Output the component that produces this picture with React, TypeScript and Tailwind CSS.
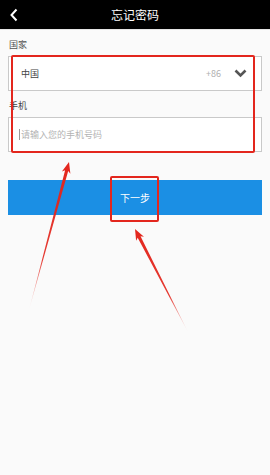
import React from "react";

const RED = "#e3261d";

function Arrow({ x1, y1, x2, y2, id }: { x1: number; y1: number; x2: number; y2: number; id: string }) {
  // tail (x1,y1) -> tip (x2,y2)
  const dx = x2 - x1;
  const dy = y2 - y1;
  const len = Math.hypot(dx, dy);
  const ux = dx / len;
  const uy = dy / len;
  const nx = -uy;
  const ny = ux;
  const bx = x2 - ux * 11;
  const by = y2 - uy * 11;
  const head = [
    [x2, y2],
    [bx + nx * 4.4, by + ny * 4.4],
    [bx + ux * 2 + nx * 1.6, by + uy * 2 + ny * 1.6],
    [x1, y1],
    [bx + ux * 2 - nx * 1.6, by + uy * 2 - ny * 1.6],
    [bx - nx * 4.4, by - ny * 4.4],
  ]
    .map((p) => p.join(","))
    .join(" ");
  return (
    <>
      <defs>
        <linearGradient id={id} gradientUnits="userSpaceOnUse" x1={x1} y1={y1} x2={x2} y2={y2}>
          <stop offset="0" stopColor={RED} stopOpacity="0" />
          <stop offset="0.35" stopColor={RED} stopOpacity="0.9" />
          <stop offset="1" stopColor={RED} stopOpacity="1" />
        </linearGradient>
      </defs>
      <polygon points={head} fill={`url(#${id})`} />
    </>
  );
}

export default function App() {
  return (
    <div
      className="relative w-[270px] h-[475px] bg-[#fafafa] overflow-hidden"
      style={{ fontFamily: '"Noto Sans CJK SC", "Liberation Sans", sans-serif' }}
    >
      <header className="h-[30px] bg-black flex items-center relative border-b border-[#e5e5e5]">
        <svg className="ml-[9px]" width="10" height="14" viewBox="0 0 10 14">
          <polyline points="7.5,1.5 2.5,7 7.5,12.5" fill="none" stroke="white" strokeWidth="2" />
        </svg>
        <h1 className="absolute inset-x-0 text-center text-white text-[12px] leading-none">忘记密码</h1>
      </header>

      <main className="px-2">
        <p className="mt-[9px] text-[9px] leading-[12px] text-[#555] pl-px">国家</p>
        <div className="mt-[5px] h-[35px] bg-white border border-[#c9c9c9] flex items-center pl-[12px] pr-[14px]">
          <span className="text-[9px] text-[#444]">中国</span>
          <span className="ml-auto text-[9px] text-[#b0b0b0]">+86</span>
          <svg className="ml-[13px]" width="13" height="9" viewBox="0 0 13 9">
            <polyline points="1.5,1.5 6.5,6.5 11.5,1.5" fill="none" stroke="#555" strokeWidth="2.6" />
          </svg>
        </div>

        <p className="mt-[9px] text-[9px] leading-[12px] text-[#444] pl-px">手机</p>
        <div className="mt-[5px] h-[35px] bg-white border border-[#c9c9c9] flex items-center pl-[10px]">
          <span className="w-px h-[11px] bg-[#999] mr-px" />
          <span className="text-[9px] text-[#b3b3b3]">请输入您的手机号码</span>
        </div>

        <button className="mt-[28px] w-full h-[35px] bg-[#1b8fe4] text-white text-[10px] flex items-center justify-center">
          下一步
        </button>
      </main>

      <div className="absolute left-[11px] top-[55px] w-[244px] h-[98px] border-2 border-[#e3261d] rounded-[2px]" />
      <div className="absolute left-[110px] top-[176px] w-[49px] h-[46px] border-2 border-[#e3261d] rounded-[2px]" />

      <svg className="absolute inset-0 pointer-events-none" width="270" height="475" viewBox="0 0 270 475">
        <Arrow id="a1" x1={29} y1={310} x2={69} y2={162} />
        <Arrow id="a2" x1={188} y1={332} x2={135} y2={229} />
      </svg>
    </div>
  );
}
